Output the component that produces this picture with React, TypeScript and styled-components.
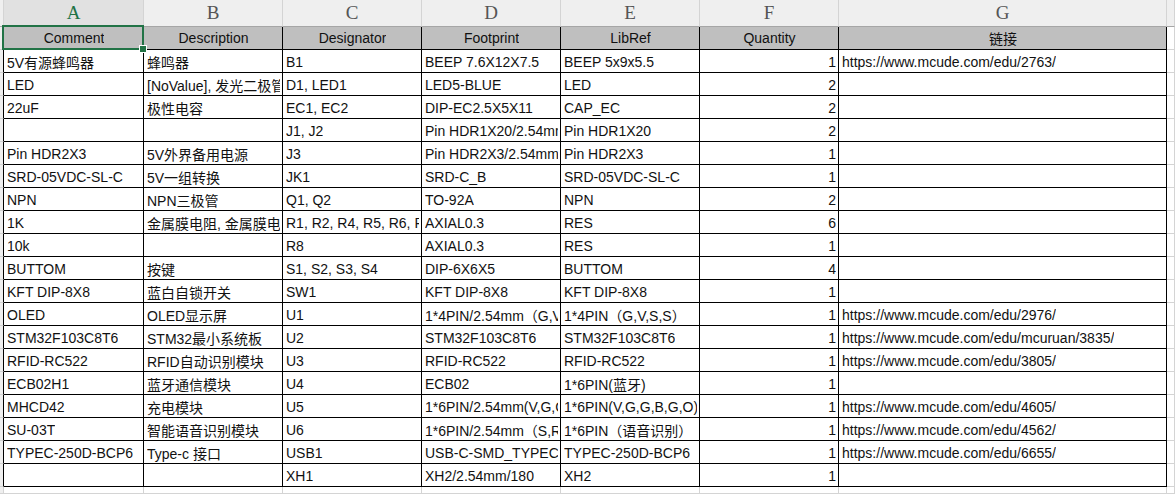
import React from 'react';
import styled, { createGlobalStyle, css } from 'styled-components';

const GlobalStyle = createGlobalStyle`
  html, body {
    margin: 0;
    padding: 0;
    background: #fff;
    overflow: hidden;
  }
`;

const Sheet = styled.div`
  display: grid;
  grid-template-columns: 4px 140px repeat(5, 139px) 328px 1fr;
  grid-template-rows: 27px repeat(20, 23px) 1fr;
  width: 1175px;
  height: 494px;
  overflow: hidden;
  font-family: 'Liberation Sans', 'Noto Sans CJK SC', sans-serif;
  font-size: 14px;
  color: #111;
`;

const ColHead = styled.div<{ $active?: boolean }>`
  display: flex;
  align-items: center;
  justify-content: center;
  box-sizing: border-box;
  background: #efefef;
  border-right: 1px solid #d4d4d4;
  border-bottom: 1px solid #a6a6a6;
  font-family: 'Liberation Serif', 'DejaVu Serif', serif;
  font-size: 19px;
  color: #555;

  ${({ $active }) =>
    $active &&
    css`
      background: #e1e1e1;
      color: #217346;
    `}
`;

const RowHead = styled.div<{ $edge?: boolean }>`
  box-sizing: border-box;
  background: #efefef;
  border-bottom: 1px solid #d4d4d4;
  border-right: 1px solid ${({ $edge }) => ($edge ? '#000' : '#d4d4d4')};
`;

const Cell = styled.div<{ $head?: boolean; $right?: boolean }>`
  position: relative;
  display: flex;
  align-items: center;
  box-sizing: border-box;
  min-width: 0;
  padding: 2px 2px 0 3px;
  background: #fff;
  border-right: 1px solid #000;
  border-bottom: 1px solid #000;
  white-space: nowrap;

  ${({ $right }) =>
    $right &&
    css`
      justify-content: flex-end;
    `}

  ${({ $head }) =>
    $head &&
    css`
      justify-content: center;
      background: #bfbfbf;
      padding-top: 0;
    `}
`;

const CellText = styled.span`
  overflow: hidden;
  max-width: 100%;
`;

const BlankCell = styled.div`
  box-sizing: border-box;
  background: #fff;
  border-bottom: 1px solid #d4d4d4;
  border-right: 1px solid #d4d4d4;
`;

const Selection = styled.div`
  position: absolute;
  top: -2px;
  left: -2px;
  right: -1px;
  bottom: -1px;
  border: 2px solid #217346;
  pointer-events: none;
  z-index: 2;
`;

const FillHandle = styled.div`
  position: absolute;
  right: -5px;
  bottom: -5px;
  width: 6px;
  height: 6px;
  background: #217346;
  border: 1px solid #fff;
  z-index: 3;
`;

const columns = ['A', 'B', 'C', 'D', 'E', 'F', 'G'];

const header = ['Comment', 'Description', 'Designator', 'Footprint', 'LibRef', 'Quantity', '链接'];

const rows: string[][] = [
  ['5V有源蜂鸣器', '蜂鸣器', 'B1', 'BEEP 7.6X12X7.5', 'BEEP 5x9x5.5', '1', 'https://www.mcude.com/edu/2763/'],
  ['LED', '[NoValue], 发光二极管', 'D1, LED1', 'LED5-BLUE', 'LED', '2', ''],
  ['22uF', '极性电容', 'EC1, EC2', 'DIP-EC2.5X5X11', 'CAP_EC', '2', ''],
  ['', '', 'J1, J2', 'Pin HDR1X20/2.54mm', 'Pin HDR1X20', '2', ''],
  ['Pin HDR2X3', '5V外界备用电源', 'J3', 'Pin HDR2X3/2.54mm-2.54mm', 'Pin HDR2X3', '1', ''],
  ['SRD-05VDC-SL-C', '5V一组转换', 'JK1', 'SRD-C_B', 'SRD-05VDC-SL-C', '1', ''],
  ['NPN', 'NPN三极管', 'Q1, Q2', 'TO-92A', 'NPN', '2', ''],
  ['1K', '金属膜电阻, 金属膜电阻', 'R1, R2, R4, R5, R6, R7', 'AXIAL0.3', 'RES', '6', ''],
  ['10k', '', 'R8', 'AXIAL0.3', 'RES', '1', ''],
  ['BUTTOM', '按键', 'S1, S2, S3, S4', 'DIP-6X6X5', 'BUTTOM', '4', ''],
  ['KFT DIP-8X8', '蓝白自锁开关', 'SW1', 'KFT DIP-8X8', 'KFT DIP-8X8', '1', ''],
  ['OLED', 'OLED显示屏', 'U1', '1*4PIN/2.54mm（G,V,S,S）', '1*4PIN（G,V,S,S）', '1', 'https://www.mcude.com/edu/2976/'],
  ['STM32F103C8T6', 'STM32最小系统板', 'U2', 'STM32F103C8T6', 'STM32F103C8T6', '1', 'https://www.mcude.com/edu/mcuruan/3835/'],
  ['RFID-RC522', 'RFID自动识别模块', 'U3', 'RFID-RC522', 'RFID-RC522', '1', 'https://www.mcude.com/edu/3805/'],
  ['ECB02H1', '蓝牙通信模块', 'U4', 'ECB02', '1*6PIN(蓝牙)', '1', ''],
  ['MHCD42', '充电模块', 'U5', '1*6PIN/2.54mm(V,G,G,B,G,O)', '1*6PIN(V,G,G,B,G,O)', '1', 'https://www.mcude.com/edu/4605/'],
  ['SU-03T', '智能语音识别模块', 'U6', '1*6PIN/2.54mm（S,R,T,G,V,B）', '1*6PIN（语音识别）', '1', 'https://www.mcude.com/edu/4562/'],
  ['TYPEC-250D-BCP6', 'Type-c 接口', 'USB1', 'USB-C-SMD_TYPEC-250D-BCP6', 'TYPEC-250D-BCP6', '1', 'https://www.mcude.com/edu/6655/'],
  ['', '', 'XH1', 'XH2/2.54mm/180', 'XH2', '1', ''],
];

const App: React.FC = () => {
  return (
    <>
      <GlobalStyle />
      <Sheet>
        <ColHead />
        {columns.map((c, i) => (
          <ColHead key={c} $active={i === 0}>
            {c}
          </ColHead>
        ))}
        <ColHead />

        <RowHead $edge />
        {header.map((h, i) => (
          <Cell key={h} $head>
            <CellText>{h}</CellText>
            {i === 0 && (
              <Selection>
                <FillHandle />
              </Selection>
            )}
          </Cell>
        ))}
        <BlankCell />

        {rows.map((row, r) => (
          <React.Fragment key={r}>
            <RowHead $edge />
            {row.map((v, i) => (
              <Cell key={i} $right={i === 5}>
                <CellText>{v}</CellText>
              </Cell>
            ))}
            <BlankCell />
          </React.Fragment>
        ))}

        <RowHead />
        {columns.map((c) => (
          <BlankCell key={c} />
        ))}
        <BlankCell />
      </Sheet>
    </>
  );
};

export default App;
